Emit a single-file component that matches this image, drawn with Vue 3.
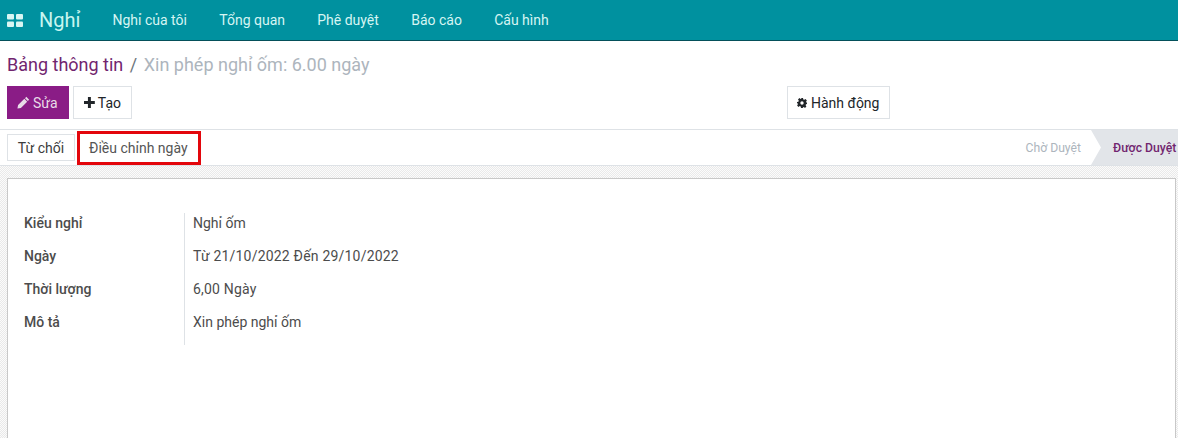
<script setup>
const menus = ['Nghỉ của tôi', 'Tổng quan', 'Phê duyệt', 'Báo cáo', 'Cấu hình']
const fields = [
  { label: 'Kiểu nghỉ', value: 'Nghỉ ốm' },
  { label: 'Ngày', value: 'Từ 21/10/2022 Đến 29/10/2022', numeric: true },
  { label: 'Thời lượng', value: '6,00 Ngày', numeric: true },
  { label: 'Mô tả', value: 'Xin phép nghỉ ốm' }
]
</script>

<template>
  <div class="page">
    <header class="navbar">
      <svg class="apps" width="16" height="13" viewBox="0 0 16 13">
        <rect x="0" y="0" width="7" height="5.5" rx="1" />
        <rect x="9" y="0" width="7" height="5.5" rx="1" />
        <rect x="0" y="7.5" width="7" height="5.5" rx="1" />
        <rect x="9" y="7.5" width="7" height="5.5" rx="1" />
      </svg>
      <span class="brand">Nghỉ</span>
      <nav class="menu">
        <a v-for="item in menus" :key="item">{{ item }}</a>
      </nav>
    </header>

    <section class="control-panel">
      <div class="breadcrumb">
        <span class="crumb-link">Bảng thông tin</span>
        <span class="crumb-sep">/</span>
        <span class="crumb-current">Xin phép nghỉ ốm: 6.00 ngày</span>
      </div>
      <div class="actions">
        <div class="actions-left">
          <button class="btn btn-primary">
            <svg width="13" height="13" viewBox="0 0 12 12">
              <path fill="#e8dbe8" d="M8.6.8 11.2 3.400 10 4.600 7.400 2ZM6.800 2.600 9.400 5.200 3.600 11 .4 11.600 1 8.400Z" />
            </svg>
            Sửa
          </button>
          <button class="btn btn-create">
            <svg width="11" height="11" viewBox="0 0 11 11">
              <path fill="#212529" d="M4 0h3v4h4v3H7v4H4V7H0V4h4Z" />
            </svg>
            Tạo
          </button>
        </div>
        <button class="btn btn-action">
          <svg width="10" height="10" viewBox="0 0 10 10">
            <path fill="#212529" fill-rule="evenodd" d="M4 0h2l.3 1.400 1 .4L8.500 1 9.900 2.400 9.100 3.600l.4 1L10 4.900V6l-1 .3-.4 1 .8 1.200-1.400 1.400-1.200-.8-1 .4L6 10H4l-.3-1.500-1-.4-1.200.8L.1 7.500.9 6.300.5 5.300 0 5V4l1.400-.3.4-1L1 1.500 2.400.1l1.200.8 1-.4ZM5 3.300a1.700 1.700 0 1 0 0 3.400 1.700 1.700 0 0 0 0-3.400Z" />
          </svg>
          Hành động
        </button>
      </div>
    </section>

    <section class="statusbar">
      <div class="status-buttons">
        <button class="btn btn-small">Từ chối</button>
        <button class="btn btn-marked">Điều chỉnh ngày</button>
      </div>
      <div class="stages">
        <span class="stage">Chờ Duyệt</span>
        <span class="stage stage-current">Được Duyệt</span>
      </div>
    </section>

    <main class="backdrop">
      <div class="sheet">
        <div class="field-table">
          <template v-for="field in fields" :key="field.label">
            <div class="field-label">{{ field.label }}</div>
            <div class="field-value" :class="{ numeric: field.numeric }">{{ field.value }}</div>
          </template>
        </div>
      </div>
    </main>
  </div>
</template>

<style>
html, body {
  margin: 0;
  overflow: hidden;
}
</style>

<style scoped>
.page {
  width: 1178px;
  height: 438px;
  overflow: hidden;
  display: flex;
  flex-direction: column;
  font-family: Roboto, "Noto Sans", sans-serif;
  font-size: 14px;
  color: #4c4c4c;
  background: #fff;
}

.navbar {
  height: 40px;
  flex: none;
  display: flex;
  align-items: center;
  background: #00919f;
  border-bottom: 1px solid #04505a;
  color: #d6f5f3;
}

.apps {
  margin-left: 7px;
  fill: #d8f6f3;
}

.brand {
  margin-left: 16px;
  font-size: 20px;
  line-height: 24px;
  color: #c8f5ef;
}

.menu {
  display: flex;
  margin-left: 32px;
  gap: 32.3px;
}

.menu a {
  font-size: 14px;
}

.control-panel {
  height: 89px;
  flex: none;
  box-sizing: border-box;
  padding: 13px 7px 0;
  border-bottom: 1px solid #dee2e6;
}

.breadcrumb {
  display: flex;
  gap: 6.5px;
  font-size: 18px;
  line-height: 22px;
}

.crumb-link {
  color: #71256f;
}

.crumb-sep {
  color: #6c757d;
}

.crumb-current {
  color: #adb5bd;
}

.actions {
  display: flex;
  margin-top: 10px;
}

.actions-left {
  display: flex;
  gap: 4px;
  width: 780px;
}

.btn {
  box-sizing: border-box;
  height: 33px;
  padding: 0 9px;
  display: inline-flex;
  align-items: center;
  gap: 3px;
  background: #fff;
  border: 1px solid #dee2e6;
  color: #212529;
  font-family: inherit;
  font-size: 14px;
}

.btn-primary {
  width: 62px;
  background: #8a1c86;
  border-color: #8a1c86;
  color: #e8dbe8;
}

.btn-create {
  width: 59px;
  padding: 0 10px;
}

.btn-action {
  width: 103px;
  gap: 4px;
}

.statusbar {
  height: 36px;
  flex: none;
  box-sizing: border-box;
  display: flex;
  justify-content: space-between;
  border-bottom: 1px solid #dee2e6;
}

.status-buttons {
  display: flex;
  align-items: center;
  gap: 2px;
  padding-left: 7px;
}

.btn-small {
  width: 68px;
  height: 27px;
  justify-content: center;
  color: #3c3c3c;
}

.btn-marked {
  width: 124px;
  height: 34px;
  border: 3px solid #e3060c;
  color: #555;
}

.stages {
  display: flex;
  align-items: stretch;
  font-size: 12.2px;
}

.stage {
  display: flex;
  align-items: center;
  padding-right: 10px;
  color: #adb5bd;
}

.stage-current {
  width: 87px;
  box-sizing: border-box;
  padding: 0 0 0 22px;
  white-space: nowrap;
  overflow: hidden;
  background: #e2e5e9;
  clip-path: polygon(0 0, 100% 0, 100% 100%, 0 100%, 10px 50%);
  color: #71256f;
  font-weight: 500;
}

.backdrop {
  flex: 1;
  padding: 12px 2px 0 7px;
  background-color: #f4f4f4;
  background-image: repeating-conic-gradient(#e9e9e9 0 25%, #fbfbfb 0 50%);
  background-size: 2px 2px;
}

.sheet {
  height: 100%;
  box-sizing: border-box;
  padding: 34px 16px 0;
  background: #fff;
  border: 1px solid #c8c8c8;
  border-bottom: none;
}

.field-table {
  display: grid;
  grid-template-columns: 161px auto;
  grid-auto-rows: 33px;
  width: fit-content;
  line-height: 20px;
}

.field-label {
  font-weight: 500;
  color: #4c4c4c;
  border-right: 1px solid #dee2e6;
}

.field-value {
  padding-left: 8px;
  color: #4c4c4c;
}

.field-value.numeric {
  letter-spacing: 0.2px;
}
</style>
